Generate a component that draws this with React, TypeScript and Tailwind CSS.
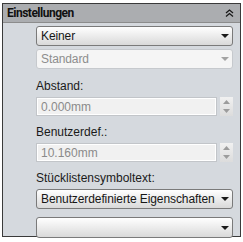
import React from 'react';

const font = { fontFamily: '"Liberation Sans", Arial, sans-serif' };

const Arrow: React.FC<{ color?: string }> = ({ color = '#1a1a1a' }) => (
    <svg width="8" height="4" viewBox="0 0 8 4" className="shrink-0">
        <path d="M0 0 H8 L4 4 Z" fill={color} />
    </svg>
);

const Select: React.FC<{ text?: string; disabled?: boolean; className?: string }> = ({ text, disabled, className }) => (
    <div
        className={
            'flex items-center justify-between rounded-[3px] border pl-[4px] pr-[3px] ' +
            (disabled
                ? 'border-[#c6c9cd] bg-[#f5f5f5] text-[#8d8d8d]'
                : 'border-[#7a7a7a] bg-gradient-to-b from-[#ffffff] to-[#d9d9d9] text-[#161616]') +
            ' ' + (className ?? '')
        }
    >
        <span className="whitespace-nowrap text-[12px] leading-none tracking-[-0.1px]">{text}</span>
        <Arrow color={disabled ? '#a3a3a3' : '#1a1a1a'} />
    </div>
);

const Spinner: React.FC = () => (
    <div className="ml-[3px] flex h-[19px] w-[13px] flex-col items-center justify-center gap-[5px] bg-gradient-to-b from-[#f1f1f1] to-[#dcdcdc]">
        <svg width="7" height="4" viewBox="0 0 7 4"><path d="M0 4 H7 L3.5 0 Z" fill="#9c9c9c" /></svg>
        <svg width="7" height="4" viewBox="0 0 7 4"><path d="M0 0 H7 L3.5 4 Z" fill="#9c9c9c" /></svg>
    </div>
);

const NumberField: React.FC<{ value: string; className?: string }> = ({ value, className }) => (
    <div className={'flex items-center ' + (className ?? '')}>
        <div className="flex h-[19px] flex-1 items-center border border-[#c2c5c9] bg-[#f1f1f1] pl-[4px] text-[12px] text-[#8a8a8a] shadow-[inset_0_0_0_1px_#ffffff]">
            {value}
        </div>
        <Spinner />
    </div>
);

const Label: React.FC<{ children: React.ReactNode; className?: string }> = ({ children, className }) => (
    <div className={'text-[12px] leading-[16px] text-[#1a1a1a] ' + (className ?? '')}>{children}</div>
);

const App: React.FC = () => {
    return (
        <div className="h-[242px] w-[243px] bg-white pl-[2px] pt-[3px]" style={font}>
            <div className="flex h-[234px] w-[239px] flex-col border border-[#3a3a3a] bg-[#d5d9de]">
                <div className="flex h-[19px] items-center justify-between border-b border-[#8c8c8c] bg-[#abadb0] pl-[4px] pr-[6px]">
                    <span className="text-[12px] font-bold tracking-[-0.5px] text-[#111111]" style={{ fontFamily: 'Roboto, "Liberation Sans", sans-serif' }}>
                        Einstellungen
                    </span>
                    <svg width="9" height="8" viewBox="0 0 9 8">
                        <path d="M1 4 L4.5 1 L8 4 M1 7.5 L4.5 4.5 L8 7.5" stroke="#1a1a1a" strokeWidth="1.3" fill="none" />
                    </svg>
                </div>
                <div className="flex flex-col pl-[33px] pr-[7px]">
                    <Select text="Keiner" className="mt-[3px] h-[20px]" />
                    <Select text="Standard" disabled className="mt-[3px] h-[20px]" />
                    <Label className="mt-[9px]">Abstand:</Label>
                    <NumberField value="0.000mm" className="mt-[3px]" />
                    <Label className="mt-[8px]">Benutzerdef.:</Label>
                    <NumberField value="10.160mm" className="mt-[3px]" />
                    <Label className="mt-[8px]">Stücklistensymboltext:</Label>
                    <Select text="Benutzerdefinierte Eigenschaften" className="mt-[3px] h-[20px]" />
                    <Select className="mt-[8px] h-[21px]" />
                </div>
            </div>
        </div>
    );
};

export default App;
